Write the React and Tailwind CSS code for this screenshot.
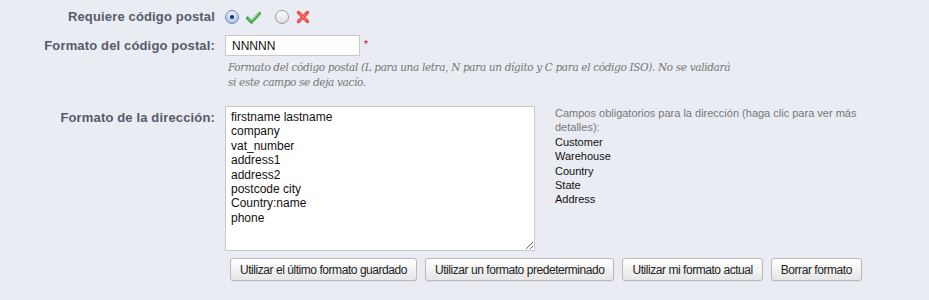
const radioOn =
  'w-[14px] h-[14px] rounded-full border border-[#6b7fa6] bg-[radial-gradient(circle_at_50%_35%,#eaf2ff_0%,#b6cdf2_60%,#8eaee3_100%)] flex items-center justify-center shadow-[inset_0_1px_1px_rgba(255,255,255,0.8)]'
const radioOff =
  'w-[14px] h-[14px] rounded-full border border-[#9a9a9a] bg-[linear-gradient(#ffffff,#dcdcdc)]'

function Check() {
  return (
    <svg width="15" height="13" viewBox="0 0 15 13">
      <path d="M1.5 7 L5.5 11 L13.5 2.5" fill="none" stroke="#4aa54a" strokeWidth="3.2" strokeLinecap="round" strokeLinejoin="round" />
      <path d="M2 6.6 L5.5 10 L13 2.2" fill="none" stroke="#9be09b" strokeWidth="1" strokeLinecap="round" />
    </svg>
  )
}

function Cross() {
  return (
    <svg width="14" height="14" viewBox="0 0 14 14">
      <path d="M2.5 2.5 L11.5 11.5 M11.5 2.5 L2.5 11.5" fill="none" stroke="#ef4747" strokeWidth="3.4" strokeLinecap="round" />
      <path d="M3 2.8 L11 10.8 M11 2.8 L3 10.8" fill="none" stroke="#ff9a9a" strokeWidth="0.8" strokeLinecap="round" />
    </svg>
  )
}

const btn =
  'h-[23px] px-[9px] rounded-[3px] border border-[#b9b9b9] bg-[linear-gradient(#ffffff,#e6e6e6)] text-[12px] tracking-[-0.45px] text-[#222] shadow-[0_1px_0_rgba(0,0,0,0.05)] whitespace-nowrap'

const label = 'w-[215px] text-right text-[13px] font-bold tracking-[0.15px] text-[#585a69]'

export default function App() {
  return (
    <div className="min-h-[300px] w-full bg-[#e9ecf3] pt-[10px] font-['Liberation_Sans',Arial,sans-serif]">
      {/* Requiere código postal */}
      <div className="flex items-center h-[14px]">
        <div className={label}>Requiere código postal</div>
        <div className="ml-[10px] flex items-center">
          <span className={radioOn}>
            <span className="w-[4px] h-[4px] rounded-full bg-[#1c2a44]" />
          </span>
          <span className="ml-[7px]"><Check /></span>
          <span className={`${radioOff} ml-[14px]`} />
          <span className="ml-[7px]"><Cross /></span>
        </div>
      </div>

      {/* Formato del código postal */}
      <div className="flex items-center mt-[11px]">
        <div className={label}>Formato del código postal:</div>
        <div className="ml-[10px] flex items-start">
          <input
            readOnly
            value="NNNNN"
            className="w-[135px] h-[21px] px-[6px] border border-[#c8c8c8] bg-white text-[12px] text-[#111] outline-none"
          />
          <span className="ml-[4px] mt-[5px] text-[10px] leading-none text-[#cc0000]">*</span>
        </div>
      </div>
      <div className="ml-[228px] mt-[4px] w-[510px] text-[10.5px] leading-[15px] italic text-[#777] font-['DejaVu_Serif',Georgia,serif] tracking-[-0.35px]">
        Formato del código postal (L para una letra, N para un dígito y C para el código ISO). No se validará si este campo se deja vacío.
      </div>

      {/* Formato de la dirección */}
      <div className="flex mt-[16px]">
        <div className={`${label} pt-[2px]`}>Formato de la dirección:</div>
        <div className="ml-[10px]">
          <div className="flex">
            <textarea
              readOnly
              value={'firstname lastname\ncompany\nvat_number\naddress1\naddress2\npostcode city\nCountry:name\nphone'}
              className="w-[310px] h-[145px] pt-[3px] px-[5px] border border-[#c8c8c8] bg-white text-[12px] leading-[14.4px] text-[#111] outline-none resize-y"
            />
            <div className="ml-[20px] w-[320px] text-[11px] leading-[14.4px]">
              <div className="text-[#777]">Campos obligatorios para la dirección (haga clic para ver más detalles):</div>
              <div className="text-[#111]">
                <div>Customer</div>
                <div>Warehouse</div>
                <div>Country</div>
                <div>State</div>
                <div>Address</div>
              </div>
            </div>
          </div>
          <div className="flex gap-[8px] mt-[7px] ml-[5px]">
            <button className={btn}>Utilizar el último formato guardado</button>
            <button className={btn}>Utilizar un formato predeterminado</button>
            <button className={btn}>Utilizar mi formato actual</button>
            <button className={btn}>Borrar formato</button>
          </div>
        </div>
      </div>
    </div>
  )
}
